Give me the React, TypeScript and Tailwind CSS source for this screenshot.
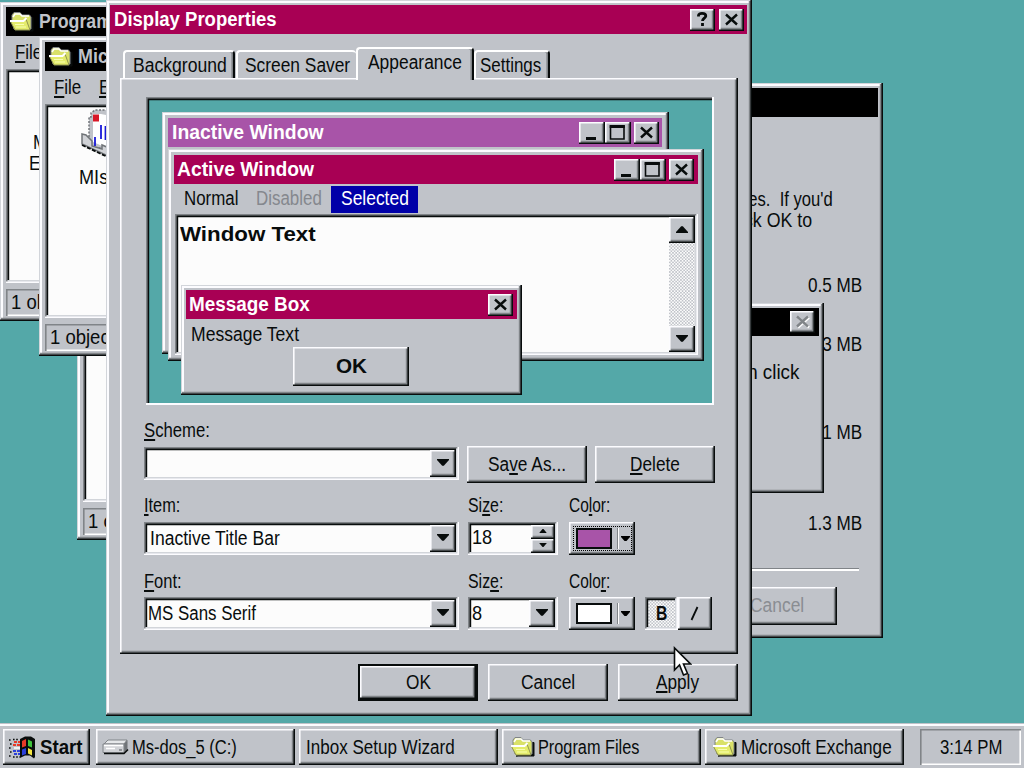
import React, { useLayoutEffect, useRef } from 'react'

const raised = 'bg-[#c0c3c9] shadow-[inset_-1.6px_-1.6px_0_#080c0c,inset_1.6px_1.6px_0_#fcfcff,inset_-3.2px_-3.2px_0_#808488]'
const windowEdge = 'bg-[#c0c3c9] shadow-[inset_-1.6px_-1.6px_0_#080c0c,inset_1px_1px_0_#d2d5da,inset_-3.2px_-3.2px_0_#808488,inset_3px_3px_0_#fcfcff]'
const sunken = 'shadow-[inset_-1.6px_-1.6px_0_#fcfcff,inset_1.6px_1.6px_0_#808488,inset_-3px_-3px_0_#d2d5da,inset_3.2px_3.2px_0_#080c0c]'

type TextProps = { w: number; bold?: boolean; className?: string; children: React.ReactNode }

// Condenses the text so that it fills exactly w pixels
function Text({ w, bold, className = '', children }: TextProps) {
  const ref = useRef<HTMLSpanElement>(null)

  useLayoutEffect(() => {
    const el = ref.current
    if (el) el.style.transform = `scaleX(${w / el.offsetWidth})`
  }, [w])

  return (
    <span className={`block shrink-0 h-6 text-[20px] leading-[22px] whitespace-pre ${bold ? 'font-bold' : ''} ${className}`} style={{ width: w }}>
      <span ref={ref} className="inline-block origin-left [&_u]:decoration-[1.6px] [&_u]:underline-offset-[2px]">{children}</span>
    </span>
  )
}

function Button({ className = '', children }: { className?: string; children?: React.ReactNode }) {
  return <button className={`flex shrink-0 items-center justify-center ${raised} ${className}`}>{children}</button>
}

type Glyph = 'close' | 'min' | 'max' | 'help'

function TitleButton({ kind, disabled }: { kind: Glyph; disabled?: boolean }) {
  return (
    <Button className={`h-[22px] ${kind === 'min' || kind === 'max' ? 'w-[26px]' : 'w-[25px]'}`}>
      <svg width="25" height="22" viewBox="0 0 25 22" fill="none" stroke="#080c0c">
        {kind === 'close' && disabled && <path d="M8 6.500l11 10M19 6.500l-11 10" stroke="#fff" strokeWidth="2.4" />}
        {kind === 'close' && <path d="M7 5.500l11 10M18 5.500L7 15.500" strokeWidth="2.4" stroke={disabled ? '#808488' : '#080c0c'} />}
        {kind === 'min' && <path d="M6 16.500h10" strokeWidth="3" />}
        {kind === 'max' && <path d="M4.500 4h13.500v13H4.500z" strokeWidth="1.600" />}
        {kind === 'max' && <path d="M3.700 4.500h15.100" strokeWidth="3" />}
        {kind === 'help' && <path d="M8.500 7.500V6.500C8.500 5 10 4.300 12 4.300S15.800 5 15.800 7C15.800 9 12.500 9.500 12.500 12M12.500 14v3" strokeWidth="2.800" />}
      </svg>
    </Button>
  )
}

function Arrow({ up, small }: { up?: boolean; small?: boolean }) {
  return (
    <svg width={small ? 8 : 12} height={small ? 4 : 7} viewBox="0 0 12 7" className={`relative -top-px ${up ? 'rotate-180' : ''}`}>
      <path d="M0 0h12v1L6.800 6.800H5.200L0 1z" fill="#080c0c" />
    </svg>
  )
}

function Folder() {
  return (
    <svg width="26" height="22" viewBox="0 0 26 22" className="shrink-0">
      <path d="M6 20h18V6.500h-3V17z" fill="#080c0c" stroke="#080c0c" />
      <path d="M3 9V4l2-2.500h6L13 4h7.500l1.500 2v12H5z" fill="#d9e168" stroke="#808488" />
      <path d="M4 6l2-3h5l2 2h7" stroke="#fff" strokeWidth="1.600" fill="none" />
      <path d="M1.500 10.500h13l2.500-2.500 4 11H6z" fill="#e4ec6c" stroke="#909450" />
      <path d="M1 10h13.500l3-3" stroke="#fff" strokeWidth="2" fill="none" />
      <path d="M6 13.500h9M7 16h10" stroke="#f8ffb0" strokeWidth="1.200" />
    </svg>
  )
}

function Drive() {
  return (
    <svg width="27" height="18" viewBox="0 0 27 18" className="shrink-0">
      <path d="M2 6l4-4h19l-3 4z" fill="#e6e8ea" stroke="#808488" />
      <path d="M22 6l3.500-4v9L22 15z" fill="#707478" />
      <path d="M1 6h21v8.500H1z" fill="#d0d2d6" stroke="#808488" />
      <path d="M2 7.500h19M4 10.500h9" stroke="#fff" strokeWidth="1.600" />
      <path d="M2 15.500h20l4-4" stroke="#080c0c" strokeWidth="1.600" fill="none" />
      <path d="M17 12h3" stroke="#808488" strokeWidth="1.600" />
    </svg>
  )
}

function WindowsLogo() {
  return (
    <svg width="27" height="23" viewBox="0 0 27 23" className="shrink-0">
      <path d="M11 3l5-2.500h6L26 3v18l-1 1.500-4-3h-5l-5 2.500z" fill="#080c0c" />
      <path d="M13 5l4-2v7l-4 1.500z" fill="#e83a28" />
      <path d="M19 3.500l4 2v6l-4-1.500z" fill="#3fc23c" />
      <path d="M13 13.500l4-1.500v6l-4 1.500z" fill="#2b3fd8" />
      <path d="M19 12l4 2v5.500l-4-2z" fill="#f5e740" />
      <path d="M5 6h6M4 9h7" stroke="#e83a28" strokeWidth="1.800" strokeDasharray="3 1" />
      <path d="M5 12h6" stroke="#fff" strokeWidth="1.500" />
      <path d="M4 15h7M5 18h6" stroke="#2b3fd8" strokeWidth="1.800" strokeDasharray="3 1" />
      <path d="M0 4h3M1 8h2M0 12h2M1 16h2M0 20h3M4 3.500h6M4 21h7" stroke="#080c0c" strokeWidth="1.500" strokeDasharray="1.600 1.600" />
    </svg>
  )
}

function MailIcon() {
  return (
    <svg width="44" height="52" viewBox="0 0 44 52">
      <path d="M8 28V8h2V4l4-3h26v38H10z" fill="#c0c3c9" stroke="#707478" strokeWidth="1.500" strokeDasharray="2 1.500" />
      <path d="M12 5h8l20 4v36L12 33z" fill="#fff" />
      <path d="M12 5.500h6v7h-6z" fill="#d81828" />
      <path d="M20 16v14M24.500 17v14M14 28v9" stroke="#1818d8" strokeWidth="1.800" />
      <path d="M1 25l4 1 6 6v5l10 3v-4l19 8v9L1 35z" fill="#d0d2d6" stroke="#707478" strokeWidth="1.500" />
      <path d="M1 36l32 15" stroke="#080c0c" strokeWidth="1.800" strokeDasharray="4 1.500" />
    </svg>
  )
}

function FolderWindow({ place, title, body, status }: {
  place: string; title: React.ReactNode; body?: React.ReactNode; status: string
}) {
  return (
    <div className={`absolute flex flex-col w-[300px] h-[319px] pl-[6px] pt-[5px] ${windowEdge} ${place}`}>
      <div className="flex h-[29px] shrink-0 items-center gap-[4px] bg-black pl-[3px] text-[#c0c3c9]">
        <Folder />
        {title}
      </div>
      <div className="flex h-[33px] shrink-0 items-center gap-[18px] pl-[9px]">
        <Text w={27}><u>F</u>ile</Text>
        <Text w={29}><u>E</u>dit</Text>
      </div>
      <div className={`h-[214px] shrink-0 overflow-hidden bg-[#fcfcfc] ${sunken}`}>{body}</div>
      <div className="mt-[6px] flex h-[27px] items-center pl-[5px] shadow-[inset_1.6px_1.6px_0_#808488,inset_-1.6px_-1.6px_0_#fff]">
        <Text w={86}>{status}</Text>
      </div>
    </div>
  )
}

function SetupWindow() {
  return (
    <div className={`absolute left-[560px] top-[83px] flex w-[323px] h-[555px] flex-col pl-[4px] pt-[5px] pr-[5px] ${windowEdge}`}>
      <div className="h-[29px] shrink-0 bg-black" />
      <div className="flex flex-col items-end">
        <div className="mt-[71px] flex flex-col pr-[45px]">
          <Text w={93} className="h-[21px]">ces.  If you'd</Text>
          <Text w={72} className="h-[21px]">ick OK to</Text>
        </div>
        <div className="flex flex-col items-end pr-[16px]">
          <Text w={54} className="mt-[44px]">0.5 MB</Text>
          <Text w={54} className="mt-[35px]">0.3 MB</Text>
          <Text w={54} className="mt-[64px]">0.1 MB</Text>
          <Text w={54} className="mt-[67px]">1.3 MB</Text>
        </div>
      </div>
      <div className="mr-[19px] mt-[32px] h-[3px] border-t border-b-2 border-t-[#808488] border-b-white" />
      <div className="mr-[41px] mt-[16px] flex justify-end">
        <Button className="w-[120px] h-[38px]"><Text w={54} className="text-[#8a8d92]">Cancel</Text></Button>
      </div>
    </div>
  )
}

function InboxWindow() {
  return (
    <div className={`absolute left-[500px] top-[303px] flex w-[324px] h-[190px] flex-col pl-[4px] pt-[5px] pr-[5px] ${windowEdge}`}>
      <div className="flex h-[28px] items-center justify-end bg-black pr-[4px]"><TitleButton kind="close" disabled /></div>
      <div className="mt-[25px] flex justify-end pr-[20px]"><Text w={78}>then click</Text></div>
    </div>
  )
}

function Preview() {
  return (
    <div className="relative ml-[2px] h-[308px] w-[568px] shrink-0 overflow-hidden bg-[#54a8a8] shadow-[inset_-2px_-2px_0_#fcfcff,inset_1.6px_1.6px_0_#808488,inset_3.2px_3.2px_0_#080c0c]">
      <div className={`absolute left-[16px] top-[15px] h-[242px] w-[507px] pl-[6px] pr-[7px] pt-[6px] ${windowEdge}`}>
        <div className="flex h-[29px] items-center bg-[#a854a8] pl-[4px] pr-[3px] text-white">
          <Text w={152} bold>Inactive Window</Text>
          <div className="ml-auto mr-[3px] flex"><TitleButton kind="min" /><TitleButton kind="max" /></div>
          <TitleButton kind="close" />
        </div>
      </div>

      <div className={`absolute left-[22px] top-[52px] h-[212px] w-[536px] pl-[6px] pr-[6px] pt-[6px] ${windowEdge}`}>
        <div className="flex h-[29px] items-center bg-[#a80054] pl-[3px] pr-[4px] text-white">
          <Text w={137} bold>Active Window</Text>
          <div className="ml-auto mr-[3px] flex"><TitleButton kind="min" /><TitleButton kind="max" /></div>
          <TitleButton kind="close" />
        </div>
        <div className="flex h-[30px] items-center pl-[10px]">
          <Text w={54}>Normal</Text>
          <Text w={66} className="ml-[18px] text-[#85888e]">Disabled</Text>
          <div className="ml-[9px] flex h-[27px] w-[87px] items-center justify-center bg-[#0000a8] text-white"><Text w={68}>Selected</Text></div>
        </div>
        <div className={`ml-px flex h-[141px] bg-[#fcfcfc] p-[3px] ${sunken}`}>
          <Text w={136} bold className="ml-[2px] mt-[6px]">Window Text</Text>
          <div className="ml-auto flex w-[26px] flex-col justify-between bg-[repeating-conic-gradient(#fcfcfc_0_25%,#c0c3c9_0_50%)] bg-[length:3.2px_3.2px]">
            <Button className="h-[26px] w-[26px]"><Arrow up /></Button>
            <Button className="h-[26px] w-[26px]"><Arrow /></Button>
          </div>
        </div>
      </div>

      <div className={`absolute left-[35px] top-[188px] flex h-[110px] w-[341px] flex-col pl-[5px] pr-[5px] pt-[5px] ${windowEdge}`}>
        <div className="flex h-[29px] items-center justify-between bg-[#a80054] pl-[3px] pr-[4px] text-white">
          <Text w={121} bold>Message Box</Text>
          <TitleButton kind="close" />
        </div>
        <Text w={108} className="ml-[5px] mt-[4px]">Message Text</Text>
        <Button className="ml-[107px] mt-0 h-[39px] w-[116px]"><Text w={31} bold>OK</Text></Button>
      </div>
    </div>
  )
}

function Combo({ className, children }: { className: string; children?: React.ReactNode }) {
  return (
    <div className={`flex h-[33px] shrink-0 items-center justify-between bg-[#fcfcfc] py-[3px] pl-[4px] pr-[3px] ${sunken} ${className}`}>
      <div>{children}</div>
      <Button className="h-[27px] w-[26px]"><Arrow /></Button>
    </div>
  )
}

function ColorButton({ color, focused }: { color: string; focused?: boolean }) {
  return (
    <Button className="h-[33px] w-[66px]">
      <div className={`flex h-[25px] w-[59px] items-center pl-[2px] ${focused ? 'border-[1.6px] border-dotted border-black' : 'border border-transparent'}`}>
        <div className={`h-[21px] w-[36px] border-2 border-[#080c0c] ${color}`} />
        <div className="ml-[5px] h-[21px] w-[2px] border-l border-[#808488] bg-white" />
        <div className="ml-[2px]"><svg width="9" height="5" viewBox="0 0 9 5"><path d="M0 0h9v1L5.500 5h-2L0 1z" /></svg></div>
      </div>
    </Button>
  )
}

const tab = 'flex shrink-0 justify-center rounded-t-[4px] bg-[#c0c3c9] border-t-2 border-l-2 border-t-white border-l-white'
const tabEnd = 'border-r-2 border-r-[#080c0c] shadow-[inset_-1.6px_0_0_#808488]'

function DisplayProperties() {
  return (
    <div className={`absolute left-[106px] top-0 flex h-[716px] w-[646px] flex-col pl-[4px] pr-[5px] pt-[5px] ${windowEdge}`}>
      <div className="flex h-[29px] shrink-0 items-center bg-[#a80054] pl-[4px] pr-[3px] text-white">
        <Text w={163} bold>Display Properties</Text>
        <div className="ml-auto flex gap-[4px]"><TitleButton kind="help" /><TitleButton kind="close" /></div>
      </div>

      <div className="ml-[13px] mt-[13px] flex h-[31px] shrink-0 items-end">
        <div className={`${tab} ${tabEnd} h-[28px] w-[112px] pl-px pt-[2px]`}><Text w={94}>Background</Text></div>
        <div className={`${tab} ml-[1px] h-[28px] w-[120px] pt-[2px]`}><Text w={105}>Screen Saver</Text></div>
        <div className={`${tab} ${tabEnd} z-10 -mb-[2px] h-[33px] w-[118px] pr-px pt-[2px]`}><Text w={94}>Appearance</Text></div>
        <div className={`${tab} border-l-0 ${tabEnd} h-[28px] w-[76px] pr-[3px] pt-[2px]`}><Text w={61}>Settings</Text></div>
      </div>

      <div className="ml-[10px] flex h-[576px] w-[618px] shrink-0 flex-col pl-[24px] pt-[19px] shadow-[inset_-1.6px_-1.6px_0_#080c0c,inset_1.6px_1.6px_0_#fcfcff,inset_-3.2px_-3.2px_0_#808488]">
        <Preview />

        <Text w={66} className="mt-[14px]"><u>S</u>cheme:</Text>
        <div className="mt-[3px] flex h-[37px] shrink-0 gap-[8px]">
          <Combo className="mt-px w-[315px]" />
          <Button className="h-[37px] w-[120px]"><Text w={78}>Sa<u>v</u>e As...</Text></Button>
          <Button className="h-[37px] w-[120px]"><Text w={50}><u>D</u>elete</Text></Button>
        </div>

        <div className="mt-[11px] flex shrink-0">
          <Text w={36} className="mr-[288px]"><u>I</u>tem:</Text>
          <Text w={35} className="mr-[66px]">Si<u>z</u>e:</Text>
          <Text w={41}>Co<u>l</u>or:</Text>
        </div>
        <div className="mt-[4px] flex shrink-0">
          <Combo className="w-[315px]"><Text w={130} className="ml-[2px]">Inactive Title Bar</Text></Combo>
          <div className={`ml-[9px] mr-[11px] flex h-[33px] w-[90px] justify-between bg-[#fcfcfc] py-[3px] pl-[4px] pr-[3px] ${sunken}`}>
            <Text w={20} className="mt-px">18</Text>
            <div className="flex flex-col">
              <Button className="h-[14px] w-[24px]"><Arrow up small /></Button>
              <Button className="h-[14px] w-[24px]"><Arrow small /></Button>
            </div>
          </div>
          <ColorButton color="bg-[#a854a8]" focused />
        </div>

        <div className="mt-[15px] flex shrink-0">
          <Text w={38} className="mr-[286px]"><u>F</u>ont:</Text>
          <Text w={35} className="mr-[66px]">Siz<u>e</u>:</Text>
          <Text w={41}>Colo<u>r</u>:</Text>
        </div>
        <div className="mt-[3px] flex shrink-0">
          <Combo className="w-[315px]"><Text w={108}>MS Sans Serif</Text></Combo>
          <Combo className="ml-[9px] w-[90px]"><Text w={10}>8</Text></Combo>
          <div className="ml-[11px] flex">
            <ColorButton color="bg-white" />
            <button className={`ml-[10px] flex h-[33px] w-[33px] items-center justify-center bg-[repeating-conic-gradient(#fcfcfc_0_25%,#c0c3c9_0_50%)] bg-[length:3.2px_3.2px] ${sunken}`}>
              <Text w={11} bold>B</Text>
            </button>
            <Button className="h-[33px] w-[34px]">
              <svg width="10" height="15" viewBox="0 0 10 15"><path d="M1.500 14L7.500 1" stroke="#080c0c" strokeWidth="1.800" /></svg>
            </Button>
          </div>
        </div>
      </div>

      <div className="ml-[248px] mt-[10px] flex shrink-0 gap-[10px]">
        <div className="border-2 border-[#080c0c]"><Button className="h-[33px] w-[116px]"><Text w={25}>OK</Text></Button></div>
        <Button className="h-[37px] w-[120px]"><Text w={54}>Cancel</Text></Button>
        <Button className="h-[37px] w-[120px] pr-[2px]"><Text w={43}><u>A</u>pply</Text></Button>
      </div>
    </div>
  )
}

function Taskbar() {
  return (
    <div className="absolute inset-x-0 bottom-0 flex h-[45px] bg-[#c0c3c9] pl-[3px] pt-[6px] shadow-[inset_0_1px_0_#c0c3c9,inset_0_3px_0_#fcfcff]">
      <Button className="h-[36px] w-[87px] gap-[4px] pr-[2px]"><WindowsLogo /><Text w={43} bold className="mt-px">Start</Text></Button>
      <Button className="ml-[6px] h-[36px] w-[199px] justify-start! gap-[3px] pl-[6px]"><Drive /><Text w={105} className="mt-px">Ms-dos_5 (C:)</Text></Button>
      <Button className="ml-[4px] h-[36px] w-[199px] justify-start! pl-[7px]"><Text w={149} className="mt-px">Inbox Setup Wizard</Text></Button>
      <Button className="ml-[4px] h-[36px] w-[199px] justify-start! gap-[2px] pl-[8px]"><Folder /><Text w={101} className="mt-px">Program Files</Text></Button>
      <Button className="ml-[4px] h-[36px] w-[199px] justify-start! gap-[3px] pl-[7px]"><Folder /><Text w={151} className="mt-px">Microsoft Exchange</Text></Button>
      <div className="ml-auto mr-[3px] flex h-[36px] w-[101px] items-center justify-center shadow-[inset_1.6px_1.6px_0_#808488,inset_-1.6px_-1.6px_0_#fff]">
        <Text w={62} className="mt-[2px]">3:14 PM</Text>
      </div>
    </div>
  )
}

export default function App() {
  return (
    <div className="relative h-[768px] w-[1024px] overflow-hidden bg-[#54a8a8] font-['Liberation_Sans',Arial,sans-serif] text-[#080c0c]">
      <FolderWindow place="left-[77px] top-[221px]" title={null} status="1 object(s)" />
      <FolderWindow
        place="left-0 top-[2px]"
        title={<Text w={118} bold>Program Files</Text>}
        body={
          <div className="flex flex-col pt-[62px]">
            <Text w={70} className="ml-[27px] h-[21px]">Microsoft</Text>
            <Text w={77} className="ml-[23px]">Exchange</Text>
          </div>
        }
        status="1 object(s)"
      />
      <FolderWindow
        place="left-[39px] top-[37px]"
        title={<Text w={170} bold>Microsoft Exchange</Text>}
        body={
          <div className="pl-[34px] pt-[5px]">
            <div className="pl-[2px]"><MailIcon /></div>
            <Text w={58} className="mt-[5px]">MIsinfo</Text>
          </div>
        }
        status="1 object(s)"
      />
      <SetupWindow />
      <InboxWindow />
      <DisplayProperties />
      <Taskbar />
      <svg className="absolute left-[673px] top-[646px]" width="19" height="31" viewBox="0 0 19 31">
        <path d="M1.500 2v22l5-5 4 10 4-1.500-4-9.500h7z" fill="#fff" stroke="#080c0c" strokeWidth="1.600" />
      </svg>
    </div>
  )
}
